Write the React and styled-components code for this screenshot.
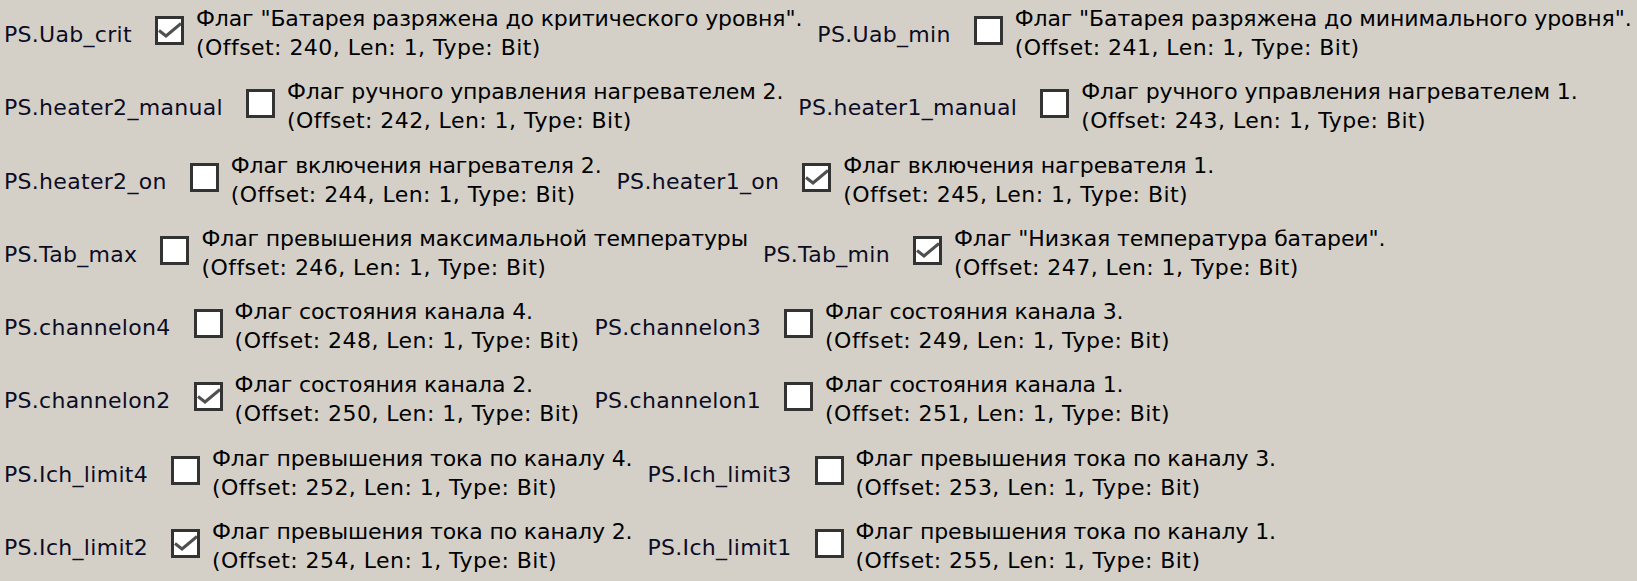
import React from 'react'
import styled, {createGlobalStyle} from 'styled-components'

const GlobalStyle = createGlobalStyle`
  html, body {
    margin: 0;
    padding: 0;
    background: #d4d0c8;
  }
`

const rows = [
  [
    {name: 'PS.Uab_crit', checked: true, text: 'Флаг "Батарея разряжена до критического уровня".', offset: 240},
    {name: 'PS.Uab_min', checked: false, text: 'Флаг "Батарея разряжена до минимального уровня".', offset: 241},
  ],
  [
    {name: 'PS.heater2_manual', checked: false, text: 'Флаг ручного управления нагревателем 2.', offset: 242},
    {name: 'PS.heater1_manual', checked: false, text: 'Флаг ручного управления нагревателем 1.', offset: 243},
  ],
  [
    {name: 'PS.heater2_on', checked: false, text: 'Флаг включения нагревателя 2.', offset: 244},
    {name: 'PS.heater1_on', checked: true, text: 'Флаг включения нагревателя 1.', offset: 245},
  ],
  [
    {name: 'PS.Tab_max', checked: false, text: 'Флаг превышения максимальной температуры', offset: 246},
    {name: 'PS.Tab_min', checked: true, text: 'Флаг "Низкая температура батареи".', offset: 247},
  ],
  [
    {name: 'PS.channelon4', checked: false, text: 'Флаг состояния канала 4.', offset: 248},
    {name: 'PS.channelon3', checked: false, text: 'Флаг состояния канала 3.', offset: 249},
  ],
  [
    {name: 'PS.channelon2', checked: true, text: 'Флаг состояния канала 2.', offset: 250},
    {name: 'PS.channelon1', checked: false, text: 'Флаг состояния канала 1.', offset: 251},
  ],
  [
    {name: 'PS.Ich_limit4', checked: false, text: 'Флаг превышения тока по каналу 4.', offset: 252},
    {name: 'PS.Ich_limit3', checked: false, text: 'Флаг превышения тока по каналу 3.', offset: 253},
  ],
  [
    {name: 'PS.Ich_limit2', checked: true, text: 'Флаг превышения тока по каналу 2.', offset: 254},
    {name: 'PS.Ich_limit1', checked: false, text: 'Флаг превышения тока по каналу 1.', offset: 255},
  ],
]

const Panel = styled.div`
  display: flex;
  flex-direction: column;
  padding-left: 4px;
  font-family: "DejaVu Sans", Verdana, sans-serif;
  font-size: 22px;
  color: #000;
`

const Row = styled.div`
  display: flex;
  align-items: flex-start;
  gap: 15px;
  height: 73.3px;
`

const Item = styled.div`
  display: flex;
  align-items: flex-start;
`

const Label = styled.span`
  margin-top: 23px;
  margin-right: 23px;
  line-height: 23px;
  letter-spacing: 0.3px;
  white-space: nowrap;
  color: #0c0c24;
`

const Box = styled.div`
  width: 29px;
  height: 29px;
  margin-top: 16px;
  margin-right: 12px;
  box-sizing: border-box;
  border: 3px solid #333;
  background: #fff;
  flex-shrink: 0;
`

const Description = styled.div`
  margin-top: 4px;
  line-height: 29px;
  white-space: nowrap;
`

const Line = styled.div`
  letter-spacing: ${p => p.$spacing};
`

const Check = () => (
  <svg width="23" height="23" viewBox="0 0 23 23">
    <polyline points="1,11.5 8,17 23,4.5" fill="none" stroke="#505050" strokeWidth="3" />
  </svg>
)

const Flag = ({name, checked, text, offset}) => (
  <Item>
    <Label>{name}</Label>
    <Box>{checked && <Check />}</Box>
    <Description>
      <Line $spacing="-0.12px">{text}</Line>
      <Line $spacing="0.45px">(Offset: {offset}, Len: 1, Type: Bit)</Line>
    </Description>
  </Item>
)

export default function App() {
  return (
    <>
      <GlobalStyle />
      <Panel>
        {rows.map((row, i) => (
          <Row key={i}>
            {row.map(f => <Flag key={f.name} {...f} />)}
          </Row>
        ))}
      </Panel>
    </>
  )
}
